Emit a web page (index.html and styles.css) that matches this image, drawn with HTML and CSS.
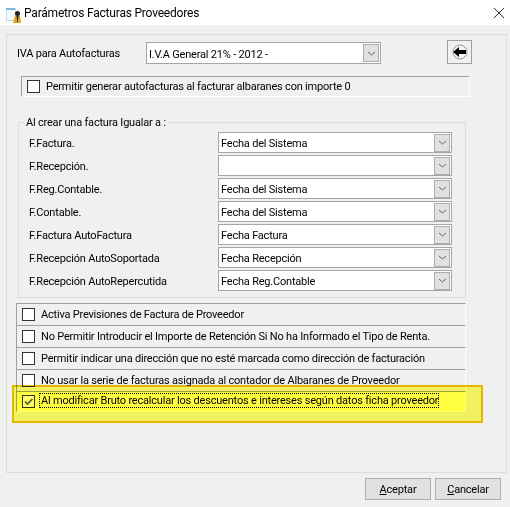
FILE: index.html
```html
<!DOCTYPE html>
<html lang="es">
<head>
    <meta charset="UTF-8">
    <title>Parámetros Facturas Proveedores</title>
    <link rel="stylesheet" href="styles.css">
</head>
<body>
    <div class="dialog">
        <div class="titlebar">
            <svg class="app-icon" width="20" height="20" viewBox="0 0 20 20">
                <rect x="3.5" y="5.5" width="9" height="12" fill="#f4f9fd" stroke="#c6dcec"/>
                <rect x="3" y="5" width="9" height="2" fill="#7db8de"/>
                <path d="M10 20l2-7 2-1 3 1 1 7z" fill="#d9a520"/>
                <circle cx="14.5" cy="10.5" r="2.5" fill="#222"/>
                <path d="M13.5 13l1 7 1-7z" fill="#222"/>
            </svg>
            <span class="title">Parámetros Facturas Proveedores</span>
            <svg class="close" width="10" height="10" viewBox="0 0 10 10">
                <path d="M0 0l10 10M10 0L0 10" stroke="#333" fill="none"/>
            </svg>
        </div>

        <div class="panel">
            <div class="iva-row">
                <span class="iva-label">IVA para Autofacturas</span>
                <div class="combo iva-combo">
                    <span>I.V.A General 21% - 2012 -</span>
                    <span class="combo-btn"><svg width="9" height="5" viewBox="0 0 9 5"><path d="M1 1l3.5 3L8 1" stroke="#666" fill="none"/></svg></span>
                </div>
                <div class="back-btn">
                    <svg width="16" height="16" viewBox="0 0 16 16">
                        <circle cx="8" cy="8" r="7" fill="#f4f4f4" stroke="#9a9a9a"/>
                        <path d="M1 8l6-5v3h7v4H7v3z" fill="#000"/>
                    </svg>
                </div>
            </div>

            <div class="zero-row">
                <span class="check"></span>
                <span>Permitir generar autofacturas al facturar albaranes con importe 0</span>
            </div>

            <div class="group">
                <span class="legend">Al crear una factura Igualar a :</span>
                <div class="date-grid">
                    <span>F.Factura.</span>
                    <div class="combo"><span>Fecha del Sistema</span><span class="combo-btn"><svg width="9" height="5" viewBox="0 0 9 5"><path d="M1 1l3.5 3L8 1" stroke="#666" fill="none"/></svg></span></div>
                    <span>F.Recepción.</span>
                    <div class="combo"><span></span><span class="combo-btn"><svg width="9" height="5" viewBox="0 0 9 5"><path d="M1 1l3.5 3L8 1" stroke="#666" fill="none"/></svg></span></div>
                    <span>F.Reg.Contable.</span>
                    <div class="combo"><span>Fecha del Sistema</span><span class="combo-btn"><svg width="9" height="5" viewBox="0 0 9 5"><path d="M1 1l3.5 3L8 1" stroke="#666" fill="none"/></svg></span></div>
                    <span>F.Contable.</span>
                    <div class="combo"><span>Fecha del Sistema</span><span class="combo-btn"><svg width="9" height="5" viewBox="0 0 9 5"><path d="M1 1l3.5 3L8 1" stroke="#666" fill="none"/></svg></span></div>
                    <span>F.Factura AutoFactura</span>
                    <div class="combo"><span>Fecha Factura</span><span class="combo-btn"><svg width="9" height="5" viewBox="0 0 9 5"><path d="M1 1l3.5 3L8 1" stroke="#666" fill="none"/></svg></span></div>
                    <span>F.Recepción AutoSoportada</span>
                    <div class="combo"><span>Fecha Recepción</span><span class="combo-btn"><svg width="9" height="5" viewBox="0 0 9 5"><path d="M1 1l3.5 3L8 1" stroke="#666" fill="none"/></svg></span></div>
                    <span>F.Recepción AutoRepercutida</span>
                    <div class="combo"><span>Fecha Reg.Contable</span><span class="combo-btn"><svg width="9" height="5" viewBox="0 0 9 5"><path d="M1 1l3.5 3L8 1" stroke="#666" fill="none"/></svg></span></div>
                </div>
            </div>

            <div class="options">
                <div class="option"><span class="check"></span><span>Activa Previsiones de Factura de Proveedor</span></div>
                <div class="option"><span class="check"></span><span>No Permitir Introducir el Importe de Retención Si No ha Informado el Tipo de Renta.</span></div>
                <div class="option"><span class="check"></span><span>Permitir indicar una dirección que no esté marcada como dirección de facturación</span></div>
                <div class="option"><span class="check"></span><span>No usar la serie de facturas asignada al contador de Albaranes de Proveedor</span></div>
                <div class="option option-focus">
                    <span class="check">
                        <svg width="11" height="11" viewBox="0 0 11 11"><path d="M2 5.5l2.5 2.5L9.5 3" stroke="#555" stroke-width="1.6" fill="none"/></svg>
                    </span>
                    <span class="focus-text">Al modificar Bruto recalcular los descuentos e intereses según datos ficha proveedor</span>
                </div>
            </div>
        </div>

        <div class="footer">
            <button class="btn"><u>A</u>ceptar</button>
            <button class="btn"><u>C</u>ancelar</button>
        </div>

        <div class="marker"></div>
    </div>
</body>
</html>
```

FILE: styles.css
```css
* {
    box-sizing: border-box;
}
html, body {
    margin: 0;
    height: 100%;
}
body {
    background-color: #f0f0f0;
    font-family: Roboto, Arial, sans-serif;
    font-size: 11px;
    letter-spacing: -0.2px;
    color: #000;
    overflow: hidden;
}
.dialog {
    position: relative;
    width: 510px;
    height: 507px;
}
.titlebar {
    display: flex;
    align-items: center;
    height: 25px;
    padding: 0 6px 0 3px;
    background-color: #fff;
}
.app-icon {
    flex: none;
}
.title {
    flex: 1;
    margin-left: 1px;
    font-size: 12px;
}
.panel {
    width: 501px;
    height: 439px;
    margin: 9px 0 0 6px;
    padding: 5px 0 0 10px;
    border: 1px solid #dcdcdc;
    border-right-color: #dfdfdf;
}
.iva-row {
    display: flex;
    align-items: center;
    height: 24px;
}
.iva-label {
    width: 129px;
    padding-top: 2px;
}
.iva-combo {
    width: 235px;
    height: 22px;
    margin-top: 2px;
}
.back-btn {
    display: flex;
    justify-content: center;
    align-items: center;
    width: 25px;
    height: 24px;
    margin-left: 66px;
    border: 1px solid #a0a0a0;
    background-color: #f0f0f0;
}
.combo {
    display: flex;
    justify-content: space-between;
    align-items: center;
    padding: 0 1px 0 2px;
    background-color: #fff;
    border: 1px solid #a6a6a6;
}
.combo > span:first-child {
    padding-top: 2px;
}
.combo-btn {
    display: flex;
    justify-content: center;
    align-items: center;
    width: 16px;
    height: 18px;
    background-color: #e1e1e1;
    border: 1px solid #adadad;
}
.check {
    display: flex;
    flex: none;
    justify-content: center;
    align-items: center;
    width: 13px;
    height: 13px;
    background-color: #fff;
    border: 1px solid #333;
}
.zero-row {
    display: flex;
    align-items: center;
    gap: 6px;
    width: 449px;
    height: 21px;
    margin: 12px 0 0 4px;
    padding-left: 5px;
    border: 1px solid #a0a0a0;
    border-right-color: #fff;
    border-bottom-color: #fff;
}
.group {
    position: relative;
    width: 448px;
    height: 176px;
    margin: 25px 0 0 1px;
    padding: 9px 0 0 10px;
    border: 1px solid #dcdcdc;
}
.legend {
    position: absolute;
    top: -7px;
    left: 5px;
    padding: 0 2px;
    background-color: #f0f0f0;
}
.date-grid {
    display: grid;
    grid-template-columns: 189px 234px;
    grid-auto-rows: 21px;
    row-gap: 2px;
    align-items: center;
}
.date-grid > span {
    padding-top: 2px;
}
.date-grid .combo {
    height: 21px;
}
.options {
    width: 450px;
    margin: 5px 0 0 -1px;
}
.option {
    display: flex;
    align-items: center;
    gap: 6px;
    height: 22px;
    padding-left: 5px;
    border: 1px solid #a0a0a0;
    border-right-color: #fff;
    border-bottom: 0;
}
.option-focus {
    height: 21px;
    background-color: #ffff9c;
    border-bottom: 1px solid #fff;
}
.focus-text {
    margin: 0 0 2px -1px;
    padding: 0 0 0 1px;
    outline: 1px dotted #000;
}
.footer {
    display: flex;
    justify-content: flex-end;
    gap: 4px;
    margin-top: 5px;
    padding-right: 9px;
}
.btn {
    width: 66px;
    height: 22px;
    padding: 0;
    background-color: #e1e1e1;
    border: 1px solid #adadad;
    font: inherit;
    letter-spacing: inherit;
    color: #000;
}
.marker {
    position: absolute;
    top: 385px;
    left: 12px;
    width: 471px;
    height: 38px;
    background-color: #ffff66;
    border: 2px solid #f2c200;
    mix-blend-mode: multiply;
}
```
